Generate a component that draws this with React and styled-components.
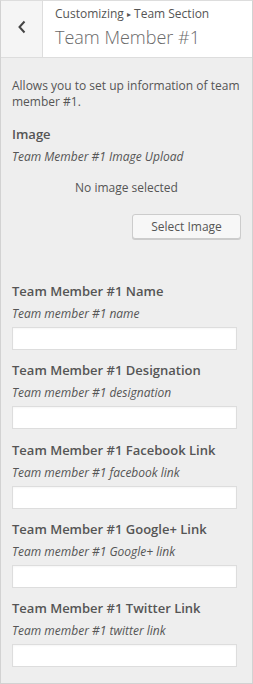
import React from 'react'
import styled, { createGlobalStyle } from 'styled-components'

const GlobalStyle = createGlobalStyle`
  html, body {
    margin: 0;
    padding: 0;
    background: #fff;
  }
  * {
    box-sizing: border-box;
  }
`

const controls = [
  { title: 'Team Member #1 Name', hint: 'Team member #1 name' },
  { title: 'Team Member #1 Designation', hint: 'Team member #1 designation' },
  { title: 'Team Member #1 Facebook Link', hint: 'Team member #1 facebook link' },
  { title: 'Team Member #1 Google+ Link', hint: 'Team member #1 Google+ link' },
  { title: 'Team Member #1 Twitter Link', hint: 'Team member #1 twitter link' },
]

const App = () => {
  return (
    <>
      <GlobalStyle />
      <Panel>
        <Header>
          <BackButton aria-label="Back">
            <svg width="10" height="14" viewBox="0 0 10 14">
              <polyline points="7.5,1.5 2.5,7 7.5,12.5" fill="none" stroke="#444" strokeWidth="2" />
            </svg>
          </BackButton>
          <HeaderText>
            <Crumb>Customizing <Arrow>▸</Arrow> Team Section</Crumb>
            <PanelTitle>Team Member #1</PanelTitle>
          </HeaderText>
        </Header>
        <Content>
          <Description>Allows you to set up information of team member #1.</Description>
          <ImageControl>
            <ControlTitle>Image</ControlTitle>
            <Hint>Team Member #1 Image Upload</Hint>
            <Placeholder>No image selected</Placeholder>
            <Actions>
              <Button>Select Image</Button>
            </Actions>
          </ImageControl>
          {controls.map((c) => (
            <Control key={c.title}>
              <ControlTitle>{c.title}</ControlTitle>
              <Hint>{c.hint}</Hint>
              <Input type="text" />
            </Control>
          ))}
        </Content>
      </Panel>
    </>
  )
}

export default App

const Panel = styled.div`
    width: 253px;
    height: 684px;
    background: #eee;
    border: 1px solid #d2d2d2;
    border-top-color: #ddd;
    font-family: 'Open Sans', 'Liberation Sans', sans-serif;
    color: #555;
    overflow: hidden;
`

const Header = styled.div`
    display: flex;
    height: 57px;
    background: #fff;
    border-bottom: 1px solid #ddd;
`

const BackButton = styled.div`
    width: 42px;
    flex-shrink: 0;
    display: flex;
    align-items: center;
    justify-content: center;
    background: #f5f5f5;
    border-right: 1px solid #ddd;
    padding-bottom: 5px;
`

const HeaderText = styled.div`
    padding: 4px 0 0 12px;
`

const Crumb = styled.div`
    font-size: 12px;
    line-height: 18px;
    color: #555;
`

const Arrow = styled.span`
    font-size: 8px;
    vertical-align: 1px;
`

const PanelTitle = styled.div`
    font-size: 18px;
    font-weight: 300;
    line-height: 26px;
    color: #6a6a6a;
    margin-top: 1px;
`

const Content = styled.div`
    padding: 20px 11px 0 11px;
`

const Description = styled.div`
    font-size: 12px;
    line-height: 16px;
    margin-bottom: 14px;
`

const ControlTitle = styled.div`
    font-size: 13px;
    font-weight: 600;
    line-height: 20px;
    margin-bottom: 4px;
`

const Hint = styled.div`
    font-size: 12px;
    font-style: italic;
    line-height: 18px;
    margin-bottom: 4px;
`

const ImageControl = styled.div`
    margin-bottom: 42px;
`

const Placeholder = styled.div`
    text-align: center;
    font-size: 12px;
    line-height: 18px;
    margin-top: 13px;
`

const Actions = styled.div`
    display: flex;
    justify-content: flex-end;
    margin-top: 17px;
`

const Button = styled.div`
    width: 109px;
    height: 25px;
    display: flex;
    align-items: center;
    justify-content: center;
    font-size: 12px;
    color: #555;
    background: #f7f7f7;
    border: 1px solid #ccc;
    border-radius: 3px;
    box-shadow: 0 1px 0 #ccc;
`

const Control = styled.div`
    margin-bottom: 10.3px;
`

const Input = styled.input`
    display: block;
    width: 225px;
    height: 23px;
    margin: 0;
    background: #fff;
    border: 1px solid #ddd;
    box-shadow: inset 0 1px 2px rgba(0, 0, 0, 0.04);
    outline: none;
`
